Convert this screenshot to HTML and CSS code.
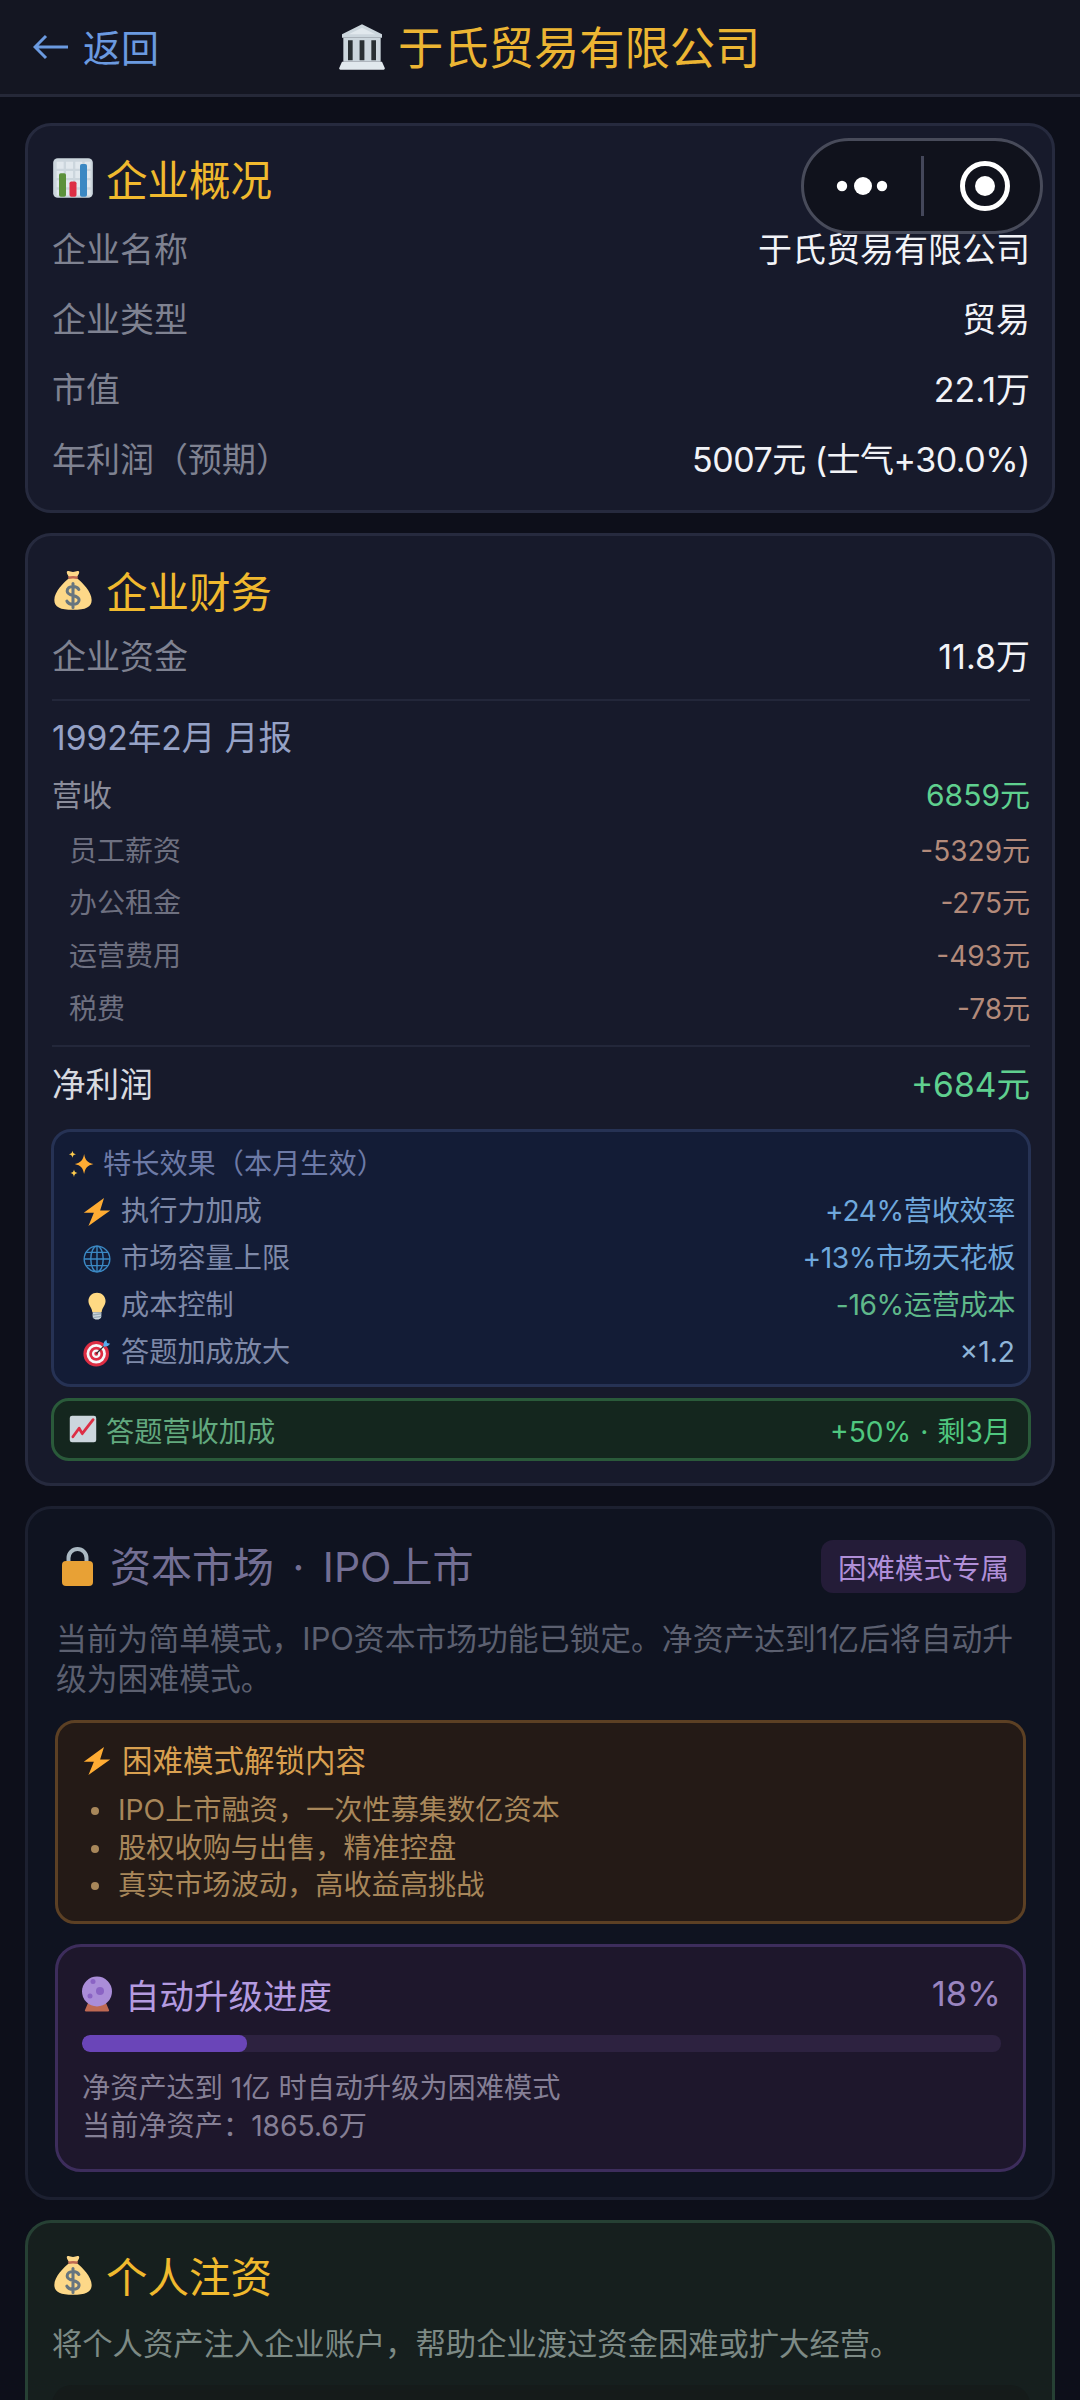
FILE: index.html
```html
<!DOCTYPE html>
<html lang="zh-CN">
<head>
<meta charset="utf-8">
<title>于氏贸易有限公司</title>
<link rel="stylesheet" href="styles.css">
</head>
<body>
<svg class="sprite" aria-hidden="true">
  <symbol id="e-bank" viewBox="0 0 36 36">
    <path fill="#ccd6dd" d="M18 1 33 8.500V11H3V8.500z"/>
    <path fill="#e1e8ed" d="M18 3.500 28 8.500H8z"/>
    <path fill="#ccd6dd" d="M4 11h28v18H4z"/>
    <path fill="#292f33" d="M7.500 13h3.500v15H7.500zM16.200 13h3.600v15h-3.600zM25 13h3.500v15H25z"/>
    <path fill="#e1e8ed" d="M3 29h30l2 4.500a1 1 0 0 1-1 1.500H2a1 1 0 0 1-1-1.500z"/>
  </symbol>
  <symbol id="e-chart" viewBox="0 0 36 36">
    <rect x="1" y="1" width="34" height="34" rx="4" fill="#ccd6dd"/>
    <path fill="#e1e8ed" d="M4 4h6v6H4zM12 4h6v6h-6zM20 4h6v6h-6zM4 12h6v6H4zM12 12h6v6h-6zM20 12h6v6h-6zM4 20h6v6H4zM12 20h6v6h-6zM20 20h6v6h-6zM4 28h6v5H4zM12 28h6v5h-6zM20 28h6v5h-6zM28 4h5v6h-5zM28 12h5v6h-5zM28 20h5v6h-5zM28 28h5v5h-5z"/>
    <rect x="6" y="14" width="6" height="20" rx="1.500" fill="#5c913b"/>
    <rect x="15" y="21" width="6" height="13" rx="1.500" fill="#dd2e44"/>
    <rect x="24" y="6" width="6" height="28" rx="1.500" fill="#3b88c3"/>
  </symbol>
  <symbol id="e-money" viewBox="0 0 36 36">
    <path fill="#fdd888" d="M13 2c1.500-1 3 .5 5 .5S21.500 1 23 2c1 .8-.5 3.500-2 5.500 5 4 13 12 13 19 0 6-5 8.500-16 8.500S2 32.500 2 26.500c0-7 8-15 13-19-1.500-2-3-4.700-2-5.500z"/>
    <path fill="#bf6952" d="M13.500 6.500c3-.8 6-.8 9 0l-1 2c-2.500-.6-4.500-.6-7 0z"/>
    <path fill="none" stroke="#67757f" stroke-width="2.600" stroke-linecap="round" d="M23 17.500c-1-1.800-3-2.500-5-2.500-3 0-5 1.500-5 3.800 0 5.200 10.200 2.600 10.200 7.800 0 2.300-2.200 3.700-5.200 3.700-2.200 0-4.200-.8-5.200-2.700M18 12.500v20.500"/>
  </symbol>
  <symbol id="e-spark" viewBox="0 0 36 36">
    <path fill="#ffac33" d="M22 5c1.500 8 4 11 12 13-8 2-10.500 5-12 13-1.500-8-4-11-12-13 8-2 10.500-5 12-13z"/>
    <path fill="#ffcc4d" d="M7 1c.7 3 1.500 3.800 4.500 4.500C8.500 6.200 7.700 7 7 10c-.7-3-1.500-3.800-4.500-4.500C5.500 4.800 6.300 4 7 1zM9 25c.7 3 1.500 3.800 4.500 4.500C10.500 30.200 9.700 31 9 35c-.7-4-1.500-4.800-4.500-5.500C7.500 28.800 8.300 28 9 25z"/>
  </symbol>
  <symbol id="e-bolt" viewBox="0 0 36 36">
    <path fill="#ffac33" d="M27 0 1 19h13L7 36 35 16H22z"/>
  </symbol>
  <symbol id="e-globe" viewBox="0 0 36 36">
    <g fill="none" stroke="#3b88c3" stroke-width="1.800">
      <circle cx="18" cy="18" r="16.500"/>
      <ellipse cx="18" cy="18" rx="8" ry="16.500"/>
      <path d="M18 1.500v33M1.500 18h33M4 9.500h28M4 26.500h28"/>
    </g>
  </symbol>
  <symbol id="e-bulb" viewBox="0 0 36 36">
    <path fill="#ffd983" d="M29 11.500c0 6-4.500 8-5 14.500H12c-.5-6.500-5-8.500-5-14.500C7 5.400 12 1 18 1s11 4.400 11 10.500z"/>
    <path fill="#ccd6dd" d="M12.500 26h11v6c0 1.500-3 3.500-5.500 3.500S12.500 33.500 12.500 32z"/>
    <path fill="#99aab5" d="M12.500 28.500l11-1.500v2l-11 1.500zM12.500 32l11-1.500c0 1-.5 1.500-1 2l-9 1.200c-.5-.5-1-1-1-1.700z"/>
  </symbol>
  <symbol id="e-target" viewBox="0 0 36 36">
    <circle cx="17" cy="19" r="16.500" fill="#dd2e44"/>
    <circle cx="17" cy="19" r="12.500" fill="#f5f8fa"/>
    <circle cx="17" cy="19" r="9" fill="#dd2e44"/>
    <circle cx="17" cy="19" r="5.500" fill="#f5f8fa"/>
    <circle cx="17" cy="19" r="2.500" fill="#dd2e44"/>
    <path fill="none" stroke="#292f33" stroke-width="1.500" d="M17 19 29 7"/>
    <path fill="#55acee" d="M26 9l1-5 3-3 1 4 4 1-3 3-5 1z"/>
  </symbol>
  <symbol id="e-trend" viewBox="0 0 36 36">
    <rect x="1" y="1" width="34" height="34" rx="3" fill="#ccd6dd"/>
    <path fill="none" stroke="#dd2e44" stroke-width="3.600" stroke-linejoin="round" stroke-linecap="round" d="M5 28l8-11 4 7L31 6"/>
  </symbol>
  <symbol id="e-lock" viewBox="0 0 31 39">
    <path fill="none" stroke="#aab8c2" stroke-width="4" d="M6.500 18V11a9 9 0 0 1 18 0v7"/>
    <rect x="0" y="14" width="31" height="25" rx="4" fill="#e8a135"/>
  </symbol>
  <symbol id="e-ball" viewBox="0 0 36 36">
    <path fill="#bf6952" d="M9 27h18l3 7a1 1 0 0 1-1 1.500H7a1 1 0 0 1-1-1.500z"/>
    <circle cx="18" cy="15.500" r="15" fill="#aa8dd8"/>
    <circle cx="21" cy="15" r="4" fill="#8a63c4"/>
    <circle cx="14" cy="5.500" r="2.500" fill="#8a63c4"/>
    <circle cx="11" cy="20" r="2.500" fill="#8a63c4"/>
  </symbol>
</svg>

<header class="topbar">
  <a class="back"><svg class="back-arrow" viewBox="0 0 36 28"><path d="M35 14H2M13 3 2 14l11 11"/></svg>返回</a>
  <h1 class="page-title"><svg class="emoji-bank"><use href="#e-bank"/></svg>于氏贸易有限公司</h1>
</header>

<div class="capsule">
  <svg class="capsule-dots" viewBox="0 0 60 20"><circle cx="9" cy="10" r="5.200"/><circle cx="30" cy="10" r="9"/><circle cx="49" cy="10" r="5.200"/></svg>
  <span class="capsule-line"></span>
  <svg class="capsule-ring" viewBox="0 0 50 50"><circle class="ring-out" cx="25" cy="25" r="22.500"/><circle cx="25" cy="25" r="10"/></svg>
</div>

<main class="page">
  <section class="card card-overview">
    <h2 class="card-title"><svg class="emoji-lg"><use href="#e-chart"/></svg>企业概况</h2>
    <div class="row row-main"><span class="label">企业名称</span><span class="val">于氏贸易有限公司</span></div>
    <div class="row row-main"><span class="label">企业类型</span><span class="val">贸易</span></div>
    <div class="row row-main"><span class="label">市值</span><span class="val">22.1万</span></div>
    <div class="row row-main"><span class="label">年利润（预期）</span><span class="val val-num">5007元 (士气+30.0%)</span></div>
  </section>

  <section class="card card-finance">
    <h2 class="card-title"><svg class="emoji-lg"><use href="#e-money"/></svg>企业财务</h2>
    <div class="row row-main row-funds"><span class="label">企业资金</span><span class="val">11.8万</span></div>
    <div class="rule rule-a"></div>
    <div class="report-title">1992年2月 月报</div>
    <div class="row row-rev"><span class="rev-label">营收</span><span class="green">6859元</span></div>
    <div class="subrows">
      <div class="row row-sub"><span>员工薪资</span><span class="cost">-5329元</span></div>
      <div class="row row-sub"><span>办公租金</span><span class="cost">-275元</span></div>
      <div class="row row-sub"><span>运营费用</span><span class="cost">-493元</span></div>
      <div class="row row-sub"><span>税费</span><span class="cost">-78元</span></div>
    </div>
    <div class="rule rule-b"></div>
    <div class="row row-net"><span class="net-label">净利润</span><span class="green">+684元</span></div>

    <div class="effects">
      <div class="effects-title"><svg class="emoji-sm"><use href="#e-spark"/></svg>特长效果（本月生效）</div>
      <div class="effect-row"><span class="effect-name"><svg class="emoji-sm"><use href="#e-bolt"/></svg>执行力加成</span><span class="eff-blue">+24%营收效率</span></div>
      <div class="effect-row"><span class="effect-name"><svg class="emoji-sm"><use href="#e-globe"/></svg>市场容量上限</span><span class="eff-blue">+13%市场天花板</span></div>
      <div class="effect-row"><span class="effect-name"><svg class="emoji-sm"><use href="#e-bulb"/></svg>成本控制</span><span class="eff-green">-16%运营成本</span></div>
      <div class="effect-row"><span class="effect-name"><svg class="emoji-sm"><use href="#e-target"/></svg>答题加成放大</span><span class="eff-pale">×1.2</span></div>
    </div>

    <div class="boost">
      <span class="boost-name"><svg class="emoji-sm"><use href="#e-trend"/></svg>答题营收加成</span>
      <span class="boost-val">+50% · 剩3月</span>
    </div>
  </section>

  <section class="card card-locked">
    <div class="locked-head">
      <h2 class="locked-title"><svg class="emoji-lock"><use href="#e-lock"/></svg>资本市场 · IPO上市</h2>
      <span class="badge">困难模式专属</span>
    </div>
    <p class="locked-desc">当前为简单模式，IPO资本市场功能已锁定。净资产达到1亿后将自动升级为困难模式。</p>

    <div class="unlock">
      <div class="unlock-title"><svg class="emoji-sm"><use href="#e-bolt"/></svg>困难模式解锁内容</div>
      <ul class="unlock-list">
        <li>IPO上市融资，一次性募集数亿资本</li>
        <li>股权收购与出售，精准控盘</li>
        <li>真实市场波动，高收益高挑战</li>
      </ul>
    </div>

    <div class="progress">
      <div class="progress-head">
        <span class="progress-name"><svg class="emoji-ball"><use href="#e-ball"/></svg>自动升级进度</span>
        <span class="progress-pct">18%</span>
      </div>
      <div class="bar"><div class="bar-fill" style="width:18%"></div></div>
      <p class="progress-note">净资产达到 1亿 时自动升级为困难模式<br>当前净资产：1865.6万</p>
    </div>
  </section>

  <section class="card card-invest">
    <h2 class="card-title"><svg class="emoji-lg"><use href="#e-money"/></svg>个人注资</h2>
    <p class="invest-desc">将个人资产注入企业账户，帮助企业渡过资金困难或扩大经营。</p>
    <div class="invest-box"></div>
  </section>
</main>
</body>
</html>
```

FILE: styles.css
```css
* { box-sizing: border-box; }
html, body { margin: 0; padding: 0; }
body {
  position: relative;
  width: 1080px;
  height: 2400px;
  overflow: hidden;
  background: #0d0f1a;
  color: #f2f3f7;
  font-family: "Inter", "Noto Sans CJK SC", sans-serif;
  font-weight: 400;
  text-spacing-trim: space-all;
}
.sprite { position: absolute; width: 0; height: 0; overflow: hidden; }
svg { display: block; flex: none; }

.topbar {
  display: flex;
  align-items: center;
  height: 97px;
  padding: 0 0 4px 33px;
  background: #141622;
  border-bottom: 3px solid #252838;
}
.back {
  display: flex;
  align-items: center;
  gap: 14px;
  width: 305px;
  font-size: 38px;
  color: #6b9ae0;
}
.back-arrow { width: 36px; height: 28px; margin-top: 4px; fill: none; stroke: #6b9ae0; stroke-width: 3; }
.page-title {
  display: flex;
  align-items: center;
  margin: 0;
  font-size: 45.300px;
  font-weight: 400;
  color: #ecb533;
}
.emoji-bank { width: 48px; height: 48px; margin: 3px 12px 0 0; }

.capsule {
  position: absolute;
  left: 801px;
  top: 138px;
  width: 242px;
  height: 96px;
  display: flex;
  align-items: center;
  background: #10121c;
  border: 3px solid #484b5a;
  border-radius: 48px;
}
.capsule-dots { width: 60px; height: 20px; margin-left: 29px; fill: #fff; }
.capsule-line { width: 3px; height: 60px; margin-left: 28px; background: #44475a; }
.capsule-ring { width: 50px; height: 50px; margin-left: 36px; fill: #fff; }
.ring-out { fill: none; stroke: #fff; stroke-width: 5; }

.page { display: flex; flex-direction: column; gap: 20px; padding: 26px 25px 0; }

.card {
  padding: 27px 22px 22px 24px;
  background: #171a2b;
  border: 3px solid #262a3e;
  border-radius: 26px;
}
.card-overview { padding-bottom: 15px; }
.card-finance { padding-top: 29px; }
.card-title {
  display: flex;
  align-items: center;
  gap: 12px;
  height: 50px;
  margin: 0 0 12px;
  font-size: 41.500px;
  font-weight: 400;
  color: #f0b92e;
}
.emoji-lg { width: 42px; height: 42px; }
.emoji-sm { width: 28px; height: 28px; }

.row { display: flex; justify-content: space-between; }
.row-main { padding: 12px 0; font-size: 34px; line-height: 46px; }
.row-funds { margin-top: -5px; }
.label { color: #7f8291; }
.val { color: #f2f3f7; }
.val-num { letter-spacing: -0.5px; }

.rule { height: 2px; background: #23273a; }
.rule-a { margin-top: 7px; }
.rule-b { margin-top: 9.600px; }
.report-title { margin-top: 15px; font-size: 33.600px; line-height: 44px; color: #96a2c6; }

.row-rev { margin-top: 15px; font-size: 30px; line-height: 40px; }
.rev-label { color: #8b8d9b; }
.green { color: #5fd08f; }
.subrows { margin-top: 9.700px; }
.row-sub { padding-left: 17px; font-size: 28px; line-height: 52.670px; color: #6e7080; }
.cost { color: #b38a7a; }
.row-net { margin-top: 15px; font-size: 33.600px; line-height: 46px; }
.net-label { color: #d8dae0; }

.effects {
  margin: 21px -1px 0;
  padding: 12px 13px 7.500px 13px;
  background: #131c36;
  border: 3px solid #263254;
  border-radius: 20px;
  font-size: 28.200px;
}
.effects-title {
  display: flex;
  align-items: center;
  gap: 8px;
  margin-bottom: 4.500px;
  line-height: 40px;
  color: #6d7aa6;
}
.effect-row {
  display: flex;
  justify-content: space-between;
  padding-left: 16px;
  line-height: 47px;
}
.effect-name { display: flex; align-items: center; gap: 10px; color: #7e89a8; }
.eff-blue, .eff-green { letter-spacing: -0.4px; }
.eff-blue { color: #6fa8dc; }
.eff-green { color: #5fb88a; }
.eff-pale { color: #8fb5d8; }

.boost {
  display: flex;
  align-items: center;
  justify-content: space-between;
  height: 63px;
  margin: 11px -1px 0;
  padding: 0 17px 0 15px;
  background: #14261e;
  border: 3px solid #2a5a3a;
  border-radius: 18px;
  font-size: 28.200px;
}
.boost-name { display: flex; align-items: center; gap: 9px; color: #62a97e; }
.boost-val { color: #4fc77f; word-spacing: 1px; }

.card-locked {
  padding: 31px 26px 25px 27px;
  background: #0f1320;
  border-color: #1c2030;
}
.locked-head { display: flex; align-items: center; justify-content: space-between; height: 53px; }
.locked-title {
  display: flex;
  align-items: center;
  gap: 17px;
  margin: 0 0 5px 7px;
  font-size: 41px;
  font-weight: 400;
  color: #736f94;
  word-spacing: 7px;
}
.emoji-lock { width: 31px; height: 39px; margin-top: 5px; }
.badge {
  display: flex;
  align-items: center;
  height: 53px;
  padding: 0 17px;
  background: #241c38;
  border-radius: 12px;
  font-size: 28.500px;
  color: #b08fd8;
}
.locked-desc {
  margin: 26px 0 0 1px;
  font-size: 30.800px;
  line-height: 40.500px;
  color: #5c6070;
}

.unlock {
  margin-top: 20.500px;
  padding: 18px 25px 16px;
  background: #241a16;
  border: 3px solid #5c4024;
  border-radius: 20px;
}
.unlock-title {
  display: flex;
  align-items: center;
  gap: 11px;
  font-size: 30.500px;
  line-height: 40px;
  color: #d9a050;
}
.unlock-list { margin: 11px 0 0; padding: 0; list-style: none; font-size: 28.200px; line-height: 37.500px; color: #a8875a; }
.unlock-list li { display: flex; align-items: center; padding-left: 8px; }
.unlock-list li::before {
  content: "";
  width: 8px;
  height: 8px;
  margin-right: 19px;
  border-radius: 50%;
  background: #a8875a;
}

.progress {
  margin-top: 20px;
  padding: 24px 22px 23px 24px;
  background: #1e172c;
  border: 3px solid #3d2d5c;
  border-radius: 26px;
}
.progress-head { display: flex; align-items: center; justify-content: space-between; height: 46px; font-size: 34.500px; }
.progress-name { display: flex; align-items: center; gap: 10px; margin-left: -3px; color: #b49be0; }
.emoji-ball { width: 36px; height: 36px; }
.progress-pct { color: #9a85c0; }
.bar { height: 17px; margin-top: 18px; background: #2d2240; border-radius: 8px; overflow: hidden; }
.bar-fill { height: 100%; background: #6a45b8; border-radius: 8px; }
.progress-note { margin: 16.700px 0 0; font-size: 28.200px; line-height: 38.600px; color: #857f95; }

.card-invest { background: #161f1e; border-color: #264034; }
.invest-desc { margin: 24px 0 0; font-size: 30.300px; line-height: 40px; color: #7d8a85; }
.invest-box { height: 60px; margin-top: 21px; background: #151b1a; border-radius: 20px; }
```
